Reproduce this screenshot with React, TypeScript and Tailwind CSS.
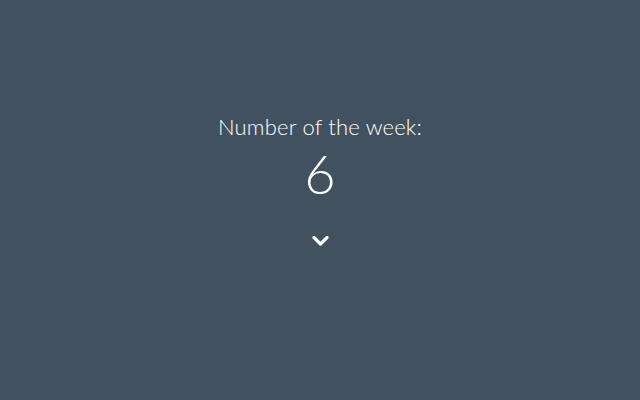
import React from "react";

export default function App() {
  return (
    <div className="w-[640px] h-[400px] bg-[#425160] flex flex-col items-center text-white" style={{ fontFamily: "Lato, 'Noto Sans', sans-serif" }}>
      <div className="mt-[113px] text-[22px] font-light leading-[28px] tracking-[0.2px]">Number of the week:</div>
      <div className="mt-[6px] text-[54px] font-light leading-[54px]">6</div>
      <svg className="mt-[34px]" width="17" height="12" viewBox="0 0 17 12">
        <path d="M2 2.5 L8.5 9 L15 2.5" fill="none" stroke="white" strokeWidth="3.2" strokeLinecap="round" strokeLinejoin="round" />
      </svg>
    </div>
  );
}
